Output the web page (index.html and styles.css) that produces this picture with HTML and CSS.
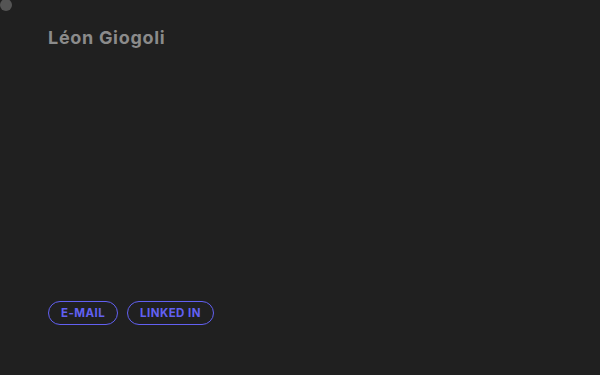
FILE: index.html
```html
<!DOCTYPE html>
<html>
<head>
<meta charset="utf-8">
<link rel="stylesheet" href="styles.css">
</head>
<body>
<span class="dot"></span>
<main class="page">
  <h1 class="name">Léon Giogoli</h1>
  <nav class="links">
    <a class="pill" href="#">E-MAIL</a>
    <a class="pill" href="#">LINKED IN</a>
  </nav>
</main>
</body>
</html>
```
FILE: styles.css
```css
html, body {
  margin: 0;
  padding: 0;
  background: #202020;
  height: 100%;
  overflow: hidden;
}
body {
  font-family: Inter, "Noto Sans", sans-serif;
}
.dot {
  position: absolute;
  left: 0;
  top: -1px;
  width: 12px;
  height: 12px;
  border-radius: 50%;
  background: #545454;
}
.page {
  display: flex;
  flex-direction: column;
  justify-content: space-between;
  box-sizing: border-box;
  height: 375px;
  padding: 26px 48px 50px;
}
.name {
  margin: 0;
  font-size: 18px;
  font-weight: 700;
  color: #8b8b8b;
  letter-spacing: 0.7px;
  line-height: 24px;
}
.links {
  display: flex;
  gap: 9px;
}
.pill {
  display: inline-flex;
  align-items: center;
  box-sizing: border-box;
  height: 24px;
  padding: 0 12px;
  border: 1.5px solid #6260f2;
  border-radius: 12px;
  color: #6260f2;
  font-size: 11.5px;
  font-weight: 700;
  letter-spacing: 0.45px;
  text-decoration: none;
}
```
